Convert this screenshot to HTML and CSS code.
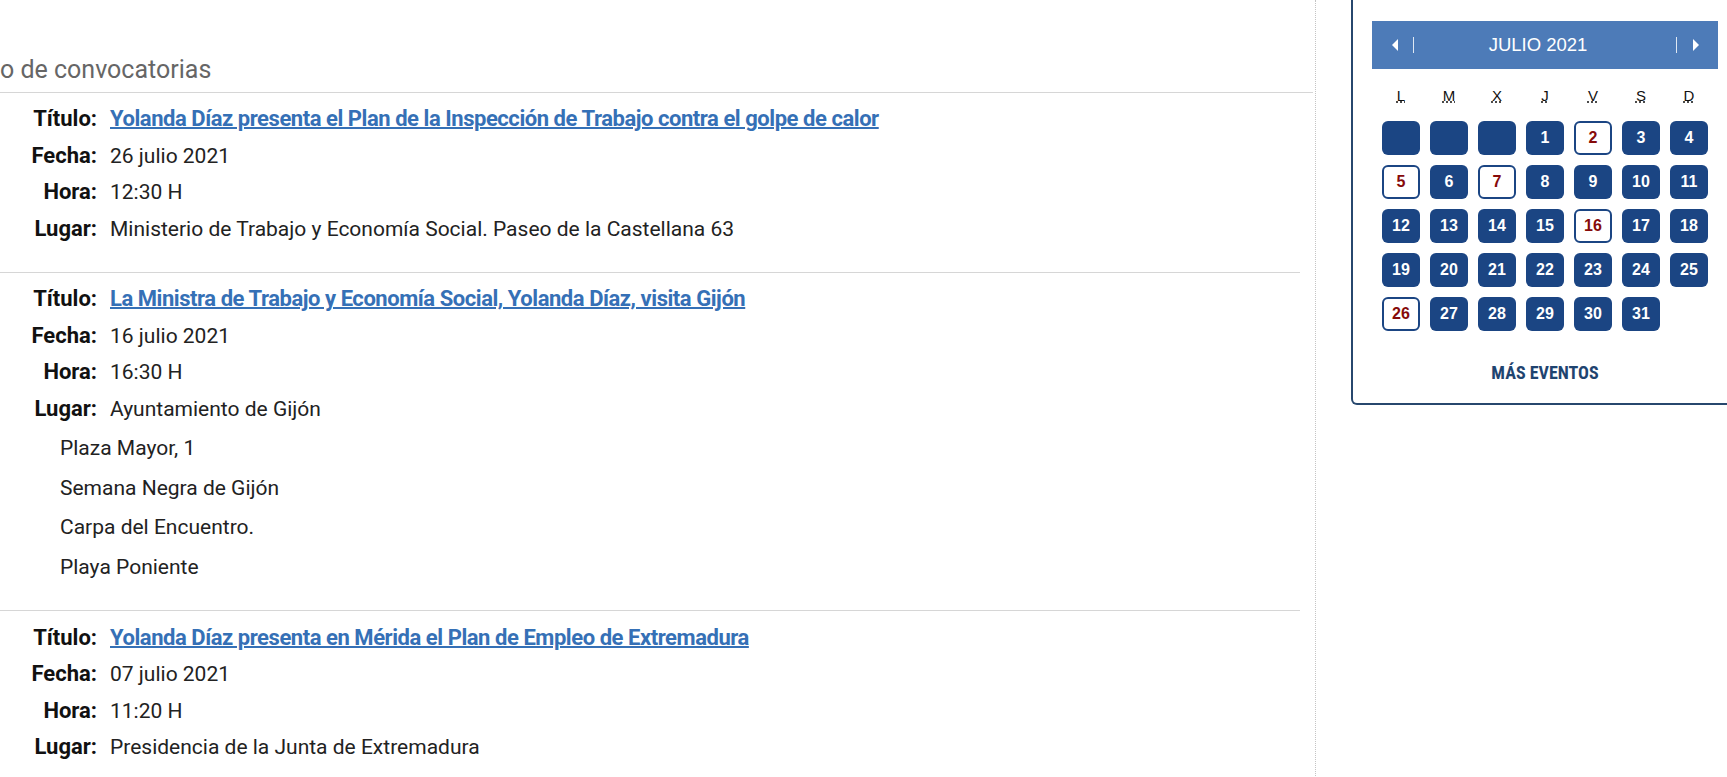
FILE: index.html
```html
<!DOCTYPE html>
<html lang="es">
<head>
    <meta charset="UTF-8">
    <meta name="viewport" content="width=device-width, initial-scale=1.0">
    <title>Agenda de convocatorias</title>
    <link rel="stylesheet" href="styles.css">
</head>
<body>
    <div class="page">
        <main class="listado">
            <h2 class="listado-titulo">o de convocatorias</h2>

            <div class="convocatoria">
                <div class="fila"><span class="etiqueta">Título:</span><a class="valor enlace" href="#">Yolanda Díaz presenta el Plan de la Inspección de Trabajo contra el golpe de calor</a></div>
                <div class="fila"><span class="etiqueta">Fecha:</span><span class="valor">26 julio 2021</span></div>
                <div class="fila"><span class="etiqueta">Hora:</span><span class="valor">12:30 H</span></div>
                <div class="fila"><span class="etiqueta">Lugar:</span><span class="valor">Ministerio de Trabajo y Economía Social. Paseo de la Castellana 63</span></div>
            </div>

            <div class="convocatoria">
                <div class="fila"><span class="etiqueta">Título:</span><a class="valor enlace" href="#">La Ministra de Trabajo y Economía Social, Yolanda Díaz, visita Gijón</a></div>
                <div class="fila"><span class="etiqueta">Fecha:</span><span class="valor">16 julio 2021</span></div>
                <div class="fila"><span class="etiqueta">Hora:</span><span class="valor">16:30 H</span></div>
                <div class="fila"><span class="etiqueta">Lugar:</span><span class="valor">Ayuntamiento de Gijón</span></div>
                <div class="extra">
                    <p>Plaza Mayor, 1</p>
                    <p>Semana Negra de Gijón</p>
                    <p>Carpa del Encuentro.</p>
                    <p>Playa Poniente</p>
                </div>
            </div>

            <div class="convocatoria">
                <div class="fila"><span class="etiqueta">Título:</span><a class="valor enlace" href="#">Yolanda Díaz presenta en Mérida el Plan de Empleo de Extremadura</a></div>
                <div class="fila"><span class="etiqueta">Fecha:</span><span class="valor">07 julio 2021</span></div>
                <div class="fila"><span class="etiqueta">Hora:</span><span class="valor">11:20 H</span></div>
                <div class="fila"><span class="etiqueta">Lugar:</span><span class="valor">Presidencia de la Junta de Extremadura</span></div>
            </div>
        </main>

        <aside class="lateral">
            <div class="calendario">
                <div class="cal-cabecera">
                    <button class="cal-nav cal-prev" aria-label="Mes anterior"><span class="flecha-izq"></span></button>
                    <span class="cal-mes">JULIO 2021</span>
                    <button class="cal-nav cal-next" aria-label="Mes siguiente"><span class="flecha-der"></span></button>
                </div>

                <div class="cal-semana">
                    <abbr title="Lunes">L</abbr>
                    <abbr title="Martes">M</abbr>
                    <abbr title="Miércoles">X</abbr>
                    <abbr title="Jueves">J</abbr>
                    <abbr title="Viernes">V</abbr>
                    <abbr title="Sábado">S</abbr>
                    <abbr title="Domingo">D</abbr>
                </div>

                <div class="cal-dias">
                    <span class="dia"></span>
                    <span class="dia"></span>
                    <span class="dia"></span>
                    <span class="dia">1</span>
                    <a class="dia evento" href="#">2</a>
                    <span class="dia">3</span>
                    <span class="dia">4</span>
                    <a class="dia evento" href="#">5</a>
                    <span class="dia">6</span>
                    <a class="dia evento" href="#">7</a>
                    <span class="dia">8</span>
                    <span class="dia">9</span>
                    <span class="dia">10</span>
                    <span class="dia">11</span>
                    <span class="dia">12</span>
                    <span class="dia">13</span>
                    <span class="dia">14</span>
                    <span class="dia">15</span>
                    <a class="dia evento" href="#">16</a>
                    <span class="dia">17</span>
                    <span class="dia">18</span>
                    <span class="dia">19</span>
                    <span class="dia">20</span>
                    <span class="dia">21</span>
                    <span class="dia">22</span>
                    <span class="dia">23</span>
                    <span class="dia">24</span>
                    <span class="dia">25</span>
                    <a class="dia evento" href="#">26</a>
                    <span class="dia">27</span>
                    <span class="dia">28</span>
                    <span class="dia">29</span>
                    <span class="dia">30</span>
                    <span class="dia">31</span>
                </div>

                <a class="mas-eventos" href="#">MÁS EVENTOS</a>
            </div>
        </aside>
    </div>
</body>
</html>
```

FILE: styles.css
```css
/* Estructura general */
body {
    margin: 0;
    font-family: Roboto, "Liberation Sans", Arial, sans-serif;
    color: #222;
    background: #fff;
    overflow: hidden;
}

.page {
    display: flex;
    align-items: flex-start;
    width: 1740px;
}

/* Columna del listado */
.listado {
    width: 1315px;
    min-height: 777px;
    border-right: 1px dotted #c4c4c4;
}

.listado-titulo {
    margin: 0 2px 0 0;
    padding: 56px 0 8px;
    font-size: 25px;
    font-weight: 400;
    line-height: 28px;
    color: #666;
    border-bottom: 1px solid #d6d6d6;
}

.convocatoria {
    margin-right: 15px;
    padding: 8px 0 25px;
}

.convocatoria + .convocatoria {
    border-top: 1px solid #d6d6d6;
}

.fila {
    display: flex;
    align-items: baseline;
    padding: 6.25px 0;
    line-height: 24px;
}

.etiqueta {
    width: 97px;
    flex-shrink: 0;
    text-align: right;
    font-weight: 700;
    font-size: 22px;
    color: #111;
}

.valor {
    margin-left: 13px;
    font-size: 21px;
}

.enlace {
    font-weight: 700;
    font-size: 22px;
    letter-spacing: -0.45px;
    color: #3570b6;
    text-decoration: underline;
    text-decoration-thickness: 2px;
}

.extra {
    padding: 2px 0 0 60px;
    margin-bottom: -2px;
}

.extra p {
    margin: 0;
    font-size: 21px;
    line-height: 39.6px;
}

/* Calendario lateral */
.lateral {
    padding-left: 35px;
}

.calendario {
    width: 346px;
    padding: 21px 19px 20px;
    border: 2px solid #27476d;
    border-top: none;
    border-radius: 0 0 6px 6px;
    font-family: "Liberation Sans", Arial, sans-serif;
}

.cal-cabecera {
    display: flex;
    align-items: center;
    height: 48px;
    padding: 0 19px 0 20px;
    background: #4d7bb8;
    color: #fff;
}

.cal-nav {
    display: flex;
    align-items: center;
    height: 16px;
    padding: 0;
    border: none;
    background: none;
    cursor: pointer;
}

.cal-prev {
    padding-right: 15px;
    border-right: 1px solid #dfe8f3;
}

.cal-next {
    padding-left: 16px;
    border-left: 1px solid #dfe8f3;
}

.flecha-izq {
    width: 0;
    height: 0;
    border-top: 6px solid transparent;
    border-bottom: 6px solid transparent;
    border-right: 6px solid #fff;
}

.flecha-der {
    width: 0;
    height: 0;
    border-top: 6px solid transparent;
    border-bottom: 6px solid transparent;
    border-left: 6px solid #fff;
}

.cal-mes {
    flex: 1;
    padding-right: 14px;
    text-align: center;
    font-size: 18.5px;
}

.cal-semana,
.cal-dias {
    display: grid;
    grid-template-columns: repeat(7, 38px);
    column-gap: 10px;
    padding-left: 10px;
}

.cal-semana {
    margin-top: 17px;
    line-height: 20px;
    font-size: 15px;
    text-align: center;
}

.cal-semana abbr {
    color: #111;
    text-decoration: underline dotted;
    text-underline-offset: 1px;
}

.cal-dias {
    margin-top: 15px;
    row-gap: 10px;
}

.dia {
    display: flex;
    align-items: center;
    justify-content: center;
    height: 34px;
    box-sizing: border-box;
    border-radius: 6px;
    background: #1b4583;
    color: #fff;
    font-weight: 700;
    font-size: 16px;
    text-decoration: none;
}

.dia.evento {
    background: #fff;
    border: 2px solid #1b4583;
    color: #860a0a;
}

.mas-eventos {
    display: block;
    margin-top: 32px;
    line-height: 20px;
    text-align: center;
    font-family: Roboto, "Liberation Sans", sans-serif;
    font-weight: 700;
    font-size: 18px;
    font-stretch: 84%;
    color: #1f4470;
    text-decoration: none;
}
```
